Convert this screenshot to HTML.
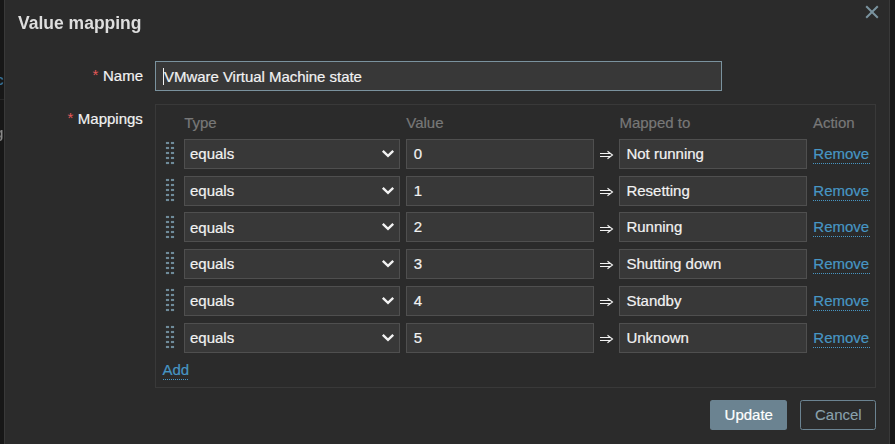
<!DOCTYPE html>
<html><head><meta charset="utf-8"><style>
html,body{margin:0;padding:0;}
body{width:895px;height:444px;overflow:hidden;background:#171717;position:relative;font-family:"Liberation Sans",sans-serif;color:#f2f2f2;}
.t{position:absolute;white-space:nowrap;-webkit-text-stroke:0.2px currentColor;}
.box{position:absolute;box-sizing:border-box;}
.dlg{position:absolute;left:4px;top:-20px;width:886px;height:500px;box-sizing:border-box;background:#2b2b2b;border-left:1px solid #393939;border-right:1px solid #393939;}
.in{position:absolute;box-sizing:border-box;height:30px;background:#383838;border:1px solid #4f4f4f;}
.dot{position:absolute;width:3px;height:2px;background:#6f8b9a;box-shadow:0 0 0.8px #6f8b9a;}
.lnk{position:absolute;white-space:nowrap;color:#4796c4;}
.ul{position:absolute;height:1px;background-image:linear-gradient(to right,#4796c4 50%,transparent 50%);background-size:2px 1px;}
</style></head><body>
<div class="t" style="left:-4.5px;top:69.80px;font-size:15px;line-height:20px;font-weight:normal;color:#3a7aa2;will-change:transform;">c</div>
<div class="box" style="left:0;top:99px;width:4px;height:1px;background:#262626;"></div>
<div class="t" style="left:-5px;top:122.80px;font-size:15px;line-height:20px;font-weight:normal;color:#8a8a8a;will-change:transform;">g</div>
<div class="dlg"></div>
<div class="t" style="left:18px;top:13.14px;font-size:17.5px;line-height:20px;font-weight:bold;color:#dedede;-webkit-text-stroke:0;will-change:transform;">Value mapping</div>
<svg style="position:absolute;left:864.3px;top:3.8px" width="16" height="16" viewBox="0 0 16 16"><path d="M2.2 2.2L13.8 13.8M13.8 2.2L2.2 13.8" stroke="#7a939f" stroke-width="2"/></svg>
<div class="t" style="left:92.6px;top:64.50px;font-size:15px;line-height:20px;font-weight:normal;color:#e45959;-webkit-text-stroke:0;">*</div>
<div class="t" style="left:103px;top:65.60px;font-size:15px;line-height:20px;font-weight:normal;">Name</div>
<div class="in" style="left:155px;top:61px;width:567px;border-color:#7a929e;"></div>
<div class="t" style="left:164px;top:66.50px;font-size:15px;line-height:20px;font-weight:normal;letter-spacing:-0.04px;">VMware Virtual Machine state</div>
<div class="box" style="left:163px;top:68px;width:1px;height:17px;background:#f2f2f2;"></div>
<div class="t" style="left:67.6px;top:107.50px;font-size:15px;line-height:20px;font-weight:normal;color:#e45959;-webkit-text-stroke:0;">*</div>
<div class="t" style="left:77.8px;top:108.60px;font-size:15px;line-height:20px;font-weight:normal;">Mappings</div>
<div class="box" style="left:155px;top:104px;width:721px;height:284px;border:1px solid #393939;"></div>
<div class="t" style="left:184.2px;top:112.60px;font-size:15px;line-height:20px;font-weight:normal;color:#787878;">Type</div>
<div class="t" style="left:406.25px;top:112.60px;font-size:15px;line-height:20px;font-weight:normal;color:#787878;">Value</div>
<div class="t" style="left:619.4px;top:112.60px;font-size:15px;line-height:20px;font-weight:normal;color:#787878;">Mapped to</div>
<div class="t" style="left:812.9px;top:112.60px;font-size:15px;line-height:20px;font-weight:normal;color:#787878;">Action</div>
<div class="dot" style="left:166px;top:142px"></div><div class="dot" style="left:171px;top:142px"></div><div class="dot" style="left:166px;top:147px"></div><div class="dot" style="left:171px;top:147px"></div><div class="dot" style="left:166px;top:152px"></div><div class="dot" style="left:171px;top:152px"></div><div class="dot" style="left:166px;top:157px"></div><div class="dot" style="left:171px;top:157px"></div><div class="dot" style="left:166px;top:162px"></div><div class="dot" style="left:171px;top:162px"></div>
<div class="in" style="left:184px;top:139.00px;width:216px;"></div>
<div class="t" style="left:190px;top:144.00px;font-size:15px;line-height:20px;font-weight:normal;">equals</div>
<svg style="position:absolute;left:381px;top:149.00px" width="14" height="9" viewBox="0 0 14 9"><path d="M1.8 1.8L7 6.8L12.2 1.8" fill="none" stroke="#f2f2f2" stroke-width="2.4"/></svg>
<div class="in" style="left:406px;top:139.00px;width:188px;"></div>
<div class="t" style="left:413.75px;top:143.80px;font-size:15px;line-height:20px;font-weight:normal;">0</div>
<svg style="position:absolute;left:598px;top:150.00px" width="18" height="12" viewBox="0 0 18 12"><path d="M2 3.5H12.5M2 6.5H12.5M9.5 1.2L14.5 5L9.5 8.8" fill="none" stroke="#f2f2f2" stroke-width="1.1"/></svg>
<div class="in" style="left:619px;top:139.00px;width:188px;"></div>
<div class="t" style="left:626.4px;top:143.80px;font-size:15px;line-height:20px;font-weight:normal;">Not running</div>
<div class="t" style="left:813.3px;top:143.80px;font-size:15px;line-height:20px;font-weight:normal;color:#4796c4;">Remove</div>
<div class="ul" style="left:813px;top:163.00px;width:57px;"></div>
<div class="dot" style="left:166px;top:179px"></div><div class="dot" style="left:171px;top:179px"></div><div class="dot" style="left:166px;top:184px"></div><div class="dot" style="left:171px;top:184px"></div><div class="dot" style="left:166px;top:189px"></div><div class="dot" style="left:171px;top:189px"></div><div class="dot" style="left:166px;top:194px"></div><div class="dot" style="left:171px;top:194px"></div><div class="dot" style="left:166px;top:199px"></div><div class="dot" style="left:171px;top:199px"></div>
<div class="in" style="left:184px;top:176.00px;width:216px;"></div>
<div class="t" style="left:190px;top:180.80px;font-size:15px;line-height:20px;font-weight:normal;">equals</div>
<svg style="position:absolute;left:381px;top:186.00px" width="14" height="9" viewBox="0 0 14 9"><path d="M1.8 1.8L7 6.8L12.2 1.8" fill="none" stroke="#f2f2f2" stroke-width="2.4"/></svg>
<div class="in" style="left:406px;top:176.00px;width:188px;"></div>
<div class="t" style="left:413.75px;top:180.60px;font-size:15px;line-height:20px;font-weight:normal;">1</div>
<svg style="position:absolute;left:598px;top:186.80px" width="18" height="12" viewBox="0 0 18 12"><path d="M2 3.5H12.5M2 6.5H12.5M9.5 1.2L14.5 5L9.5 8.8" fill="none" stroke="#f2f2f2" stroke-width="1.1"/></svg>
<div class="in" style="left:619px;top:176.00px;width:188px;"></div>
<div class="t" style="left:626.4px;top:180.60px;font-size:15px;line-height:20px;font-weight:normal;">Resetting</div>
<div class="t" style="left:813.3px;top:180.60px;font-size:15px;line-height:20px;font-weight:normal;color:#4796c4;">Remove</div>
<div class="ul" style="left:813px;top:200.00px;width:57px;"></div>
<div class="dot" style="left:166px;top:216px"></div><div class="dot" style="left:171px;top:216px"></div><div class="dot" style="left:166px;top:221px"></div><div class="dot" style="left:171px;top:221px"></div><div class="dot" style="left:166px;top:226px"></div><div class="dot" style="left:171px;top:226px"></div><div class="dot" style="left:166px;top:231px"></div><div class="dot" style="left:171px;top:231px"></div><div class="dot" style="left:166px;top:236px"></div><div class="dot" style="left:171px;top:236px"></div>
<div class="in" style="left:184px;top:212.00px;width:216px;"></div>
<div class="t" style="left:190px;top:217.60px;font-size:15px;line-height:20px;font-weight:normal;">equals</div>
<svg style="position:absolute;left:381px;top:222.00px" width="14" height="9" viewBox="0 0 14 9"><path d="M1.8 1.8L7 6.8L12.2 1.8" fill="none" stroke="#f2f2f2" stroke-width="2.4"/></svg>
<div class="in" style="left:406px;top:212.00px;width:188px;"></div>
<div class="t" style="left:413.75px;top:217.40px;font-size:15px;line-height:20px;font-weight:normal;">2</div>
<svg style="position:absolute;left:598px;top:223.60px" width="18" height="12" viewBox="0 0 18 12"><path d="M2 3.5H12.5M2 6.5H12.5M9.5 1.2L14.5 5L9.5 8.8" fill="none" stroke="#f2f2f2" stroke-width="1.1"/></svg>
<div class="in" style="left:619px;top:212.00px;width:188px;"></div>
<div class="t" style="left:626.4px;top:217.40px;font-size:15px;line-height:20px;font-weight:normal;">Running</div>
<div class="t" style="left:813.3px;top:217.40px;font-size:15px;line-height:20px;font-weight:normal;color:#4796c4;">Remove</div>
<div class="ul" style="left:813px;top:236.00px;width:57px;"></div>
<div class="dot" style="left:166px;top:252px"></div><div class="dot" style="left:171px;top:252px"></div><div class="dot" style="left:166px;top:257px"></div><div class="dot" style="left:171px;top:257px"></div><div class="dot" style="left:166px;top:262px"></div><div class="dot" style="left:171px;top:262px"></div><div class="dot" style="left:166px;top:267px"></div><div class="dot" style="left:171px;top:267px"></div><div class="dot" style="left:166px;top:272px"></div><div class="dot" style="left:171px;top:272px"></div>
<div class="in" style="left:184px;top:249.00px;width:216px;"></div>
<div class="t" style="left:190px;top:254.40px;font-size:15px;line-height:20px;font-weight:normal;">equals</div>
<svg style="position:absolute;left:381px;top:259.00px" width="14" height="9" viewBox="0 0 14 9"><path d="M1.8 1.8L7 6.8L12.2 1.8" fill="none" stroke="#f2f2f2" stroke-width="2.4"/></svg>
<div class="in" style="left:406px;top:249.00px;width:188px;"></div>
<div class="t" style="left:413.75px;top:254.20px;font-size:15px;line-height:20px;font-weight:normal;">3</div>
<svg style="position:absolute;left:598px;top:260.40px" width="18" height="12" viewBox="0 0 18 12"><path d="M2 3.5H12.5M2 6.5H12.5M9.5 1.2L14.5 5L9.5 8.8" fill="none" stroke="#f2f2f2" stroke-width="1.1"/></svg>
<div class="in" style="left:619px;top:249.00px;width:188px;"></div>
<div class="t" style="left:626.4px;top:254.20px;font-size:15px;line-height:20px;font-weight:normal;">Shutting down</div>
<div class="t" style="left:813.3px;top:254.20px;font-size:15px;line-height:20px;font-weight:normal;color:#4796c4;">Remove</div>
<div class="ul" style="left:813px;top:273.00px;width:57px;"></div>
<div class="dot" style="left:166px;top:289px"></div><div class="dot" style="left:171px;top:289px"></div><div class="dot" style="left:166px;top:294px"></div><div class="dot" style="left:171px;top:294px"></div><div class="dot" style="left:166px;top:299px"></div><div class="dot" style="left:171px;top:299px"></div><div class="dot" style="left:166px;top:304px"></div><div class="dot" style="left:171px;top:304px"></div><div class="dot" style="left:166px;top:309px"></div><div class="dot" style="left:171px;top:309px"></div>
<div class="in" style="left:184px;top:286.00px;width:216px;"></div>
<div class="t" style="left:190px;top:291.20px;font-size:15px;line-height:20px;font-weight:normal;">equals</div>
<svg style="position:absolute;left:381px;top:296.00px" width="14" height="9" viewBox="0 0 14 9"><path d="M1.8 1.8L7 6.8L12.2 1.8" fill="none" stroke="#f2f2f2" stroke-width="2.4"/></svg>
<div class="in" style="left:406px;top:286.00px;width:188px;"></div>
<div class="t" style="left:413.75px;top:291.00px;font-size:15px;line-height:20px;font-weight:normal;">4</div>
<svg style="position:absolute;left:598px;top:297.20px" width="18" height="12" viewBox="0 0 18 12"><path d="M2 3.5H12.5M2 6.5H12.5M9.5 1.2L14.5 5L9.5 8.8" fill="none" stroke="#f2f2f2" stroke-width="1.1"/></svg>
<div class="in" style="left:619px;top:286.00px;width:188px;"></div>
<div class="t" style="left:626.4px;top:291.00px;font-size:15px;line-height:20px;font-weight:normal;">Standby</div>
<div class="t" style="left:813.3px;top:291.00px;font-size:15px;line-height:20px;font-weight:normal;color:#4796c4;">Remove</div>
<div class="ul" style="left:813px;top:310.00px;width:57px;"></div>
<div class="dot" style="left:166px;top:326px"></div><div class="dot" style="left:171px;top:326px"></div><div class="dot" style="left:166px;top:331px"></div><div class="dot" style="left:171px;top:331px"></div><div class="dot" style="left:166px;top:336px"></div><div class="dot" style="left:171px;top:336px"></div><div class="dot" style="left:166px;top:341px"></div><div class="dot" style="left:171px;top:341px"></div><div class="dot" style="left:166px;top:346px"></div><div class="dot" style="left:171px;top:346px"></div>
<div class="in" style="left:184px;top:323.00px;width:216px;"></div>
<div class="t" style="left:190px;top:328.00px;font-size:15px;line-height:20px;font-weight:normal;">equals</div>
<svg style="position:absolute;left:381px;top:333.00px" width="14" height="9" viewBox="0 0 14 9"><path d="M1.8 1.8L7 6.8L12.2 1.8" fill="none" stroke="#f2f2f2" stroke-width="2.4"/></svg>
<div class="in" style="left:406px;top:323.00px;width:188px;"></div>
<div class="t" style="left:413.75px;top:327.80px;font-size:15px;line-height:20px;font-weight:normal;">5</div>
<svg style="position:absolute;left:598px;top:334.00px" width="18" height="12" viewBox="0 0 18 12"><path d="M2 3.5H12.5M2 6.5H12.5M9.5 1.2L14.5 5L9.5 8.8" fill="none" stroke="#f2f2f2" stroke-width="1.1"/></svg>
<div class="in" style="left:619px;top:323.00px;width:188px;"></div>
<div class="t" style="left:626.4px;top:327.80px;font-size:15px;line-height:20px;font-weight:normal;">Unknown</div>
<div class="t" style="left:813.3px;top:327.80px;font-size:15px;line-height:20px;font-weight:normal;color:#4796c4;">Remove</div>
<div class="ul" style="left:813px;top:347.00px;width:57px;"></div>
<div class="t" style="left:162.5px;top:359.70px;font-size:15px;line-height:20px;font-weight:normal;color:#4796c4;">Add</div>
<div class="ul" style="left:162.5px;top:379px;width:26px;"></div>
<div class="box" style="left:710px;top:400px;width:77px;height:30px;background:#6b8391;border-radius:2.5px;"></div>
<div class="t" style="left:724.6px;top:404.80px;font-size:15px;line-height:20px;font-weight:normal;color:#ffffff;">Update</div>
<div class="box" style="left:800px;top:400px;width:76px;height:30px;border:1px solid #6b8391;border-radius:2.5px;"></div>
<div class="t" style="left:815px;top:404.80px;font-size:15px;line-height:20px;font-weight:normal;color:#8aa2ae;-webkit-text-stroke:0.1px currentColor;">Cancel</div>
</body></html>
